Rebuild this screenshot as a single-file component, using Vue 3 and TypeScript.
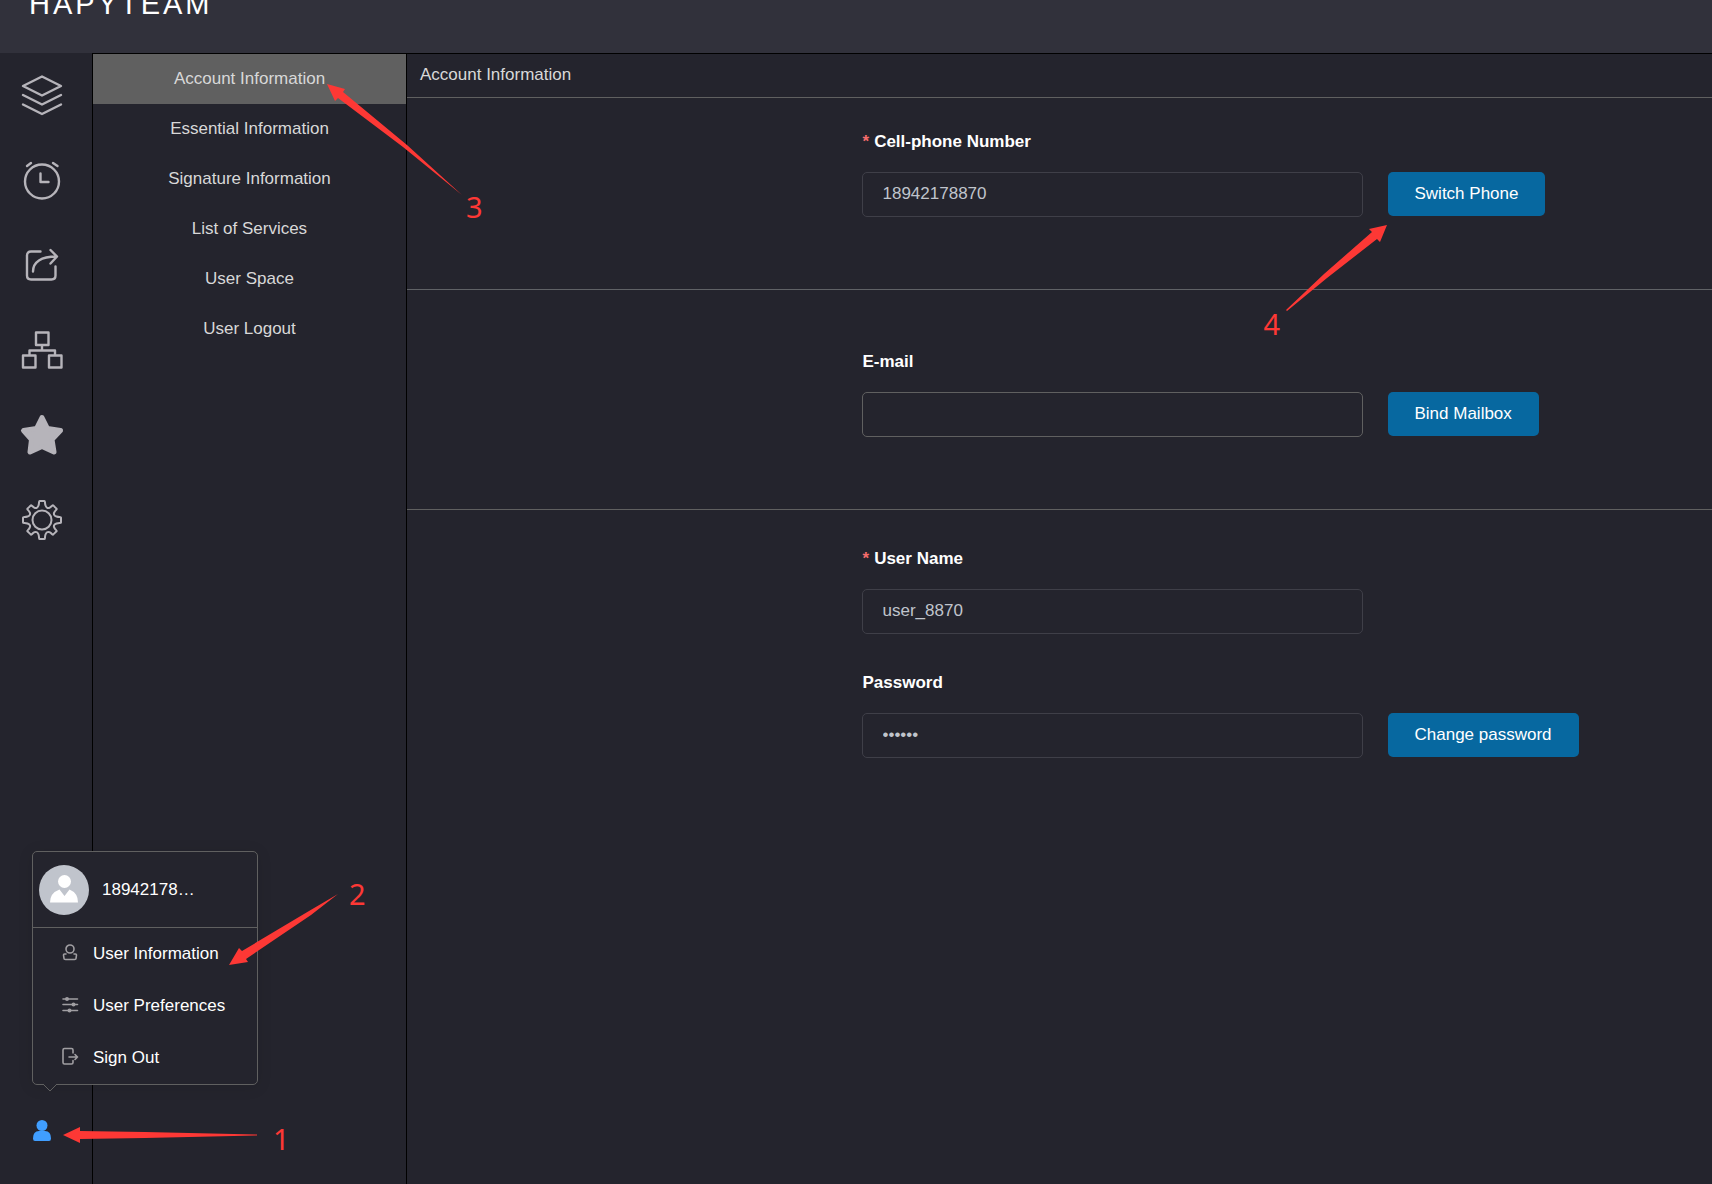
<script setup lang="ts">
import { ref } from 'vue'

const sections = [
  'Account Information',
  'Essential Information',
  'Signature Information',
  'List of Services',
  'User Space',
  'User Logout',
]
const active = ref('Account Information')

const phone = ref('18942178870')
const email = ref('')
const userName = ref('user_8870')
const password = ref('secret')

// Smoothed outline of an eight-toothed gear centred on the origin.
function gearPath(): string {
  const tooth: [number, number][] = [
    [-4, -13],
    [-3, -16],
    [-3, -19],
    [-2, -19],
    [2, -19],
    [3, -19],
    [3, -16],
    [4, -13],
  ]
  const points: [number, number][] = []
  for (let k = 0; k < 8; k++) {
    const a = (k * Math.PI) / 4
    const scale = k % 2 ? 0.96 : 1
    for (const [x, y] of tooth) {
      points.push([
        scale * (x * Math.cos(a) - y * Math.sin(a)),
        scale * (x * Math.sin(a) + y * Math.cos(a)),
      ])
    }
  }
  const at = (p: number, q: number) => `${p.toFixed(2)} ${q.toFixed(2)}`
  const last = points[points.length - 1]
  let d = `M${at((last[0] + points[0][0]) / 2, (last[1] + points[0][1]) / 2)}`
  points.forEach((p, i) => {
    const next = points[(i + 1) % points.length]
    d += `Q${at(p[0], p[1])} ${at((p[0] + next[0]) / 2, (p[1] + next[1]) / 2)}`
  })
  return `${d}Z`
}
const gear = gearPath()
</script>

<template>
  <div class="app">
    <header class="topbar">
      <h1 class="brand">HAPYTEAM</h1>
    </header>

    <div class="body">
      <nav class="rail" aria-label="Main">
        <button class="rail-btn" type="button" aria-label="Projects">
          <svg viewBox="0 0 40 40">
            <path d="M20 1.500L39 11L20 20.500L1 11Z M1 20L20 29.500L39 20 M1 29.500L20 39L39 29.500" />
          </svg>
        </button>
        <button class="rail-btn" type="button" aria-label="Reminders">
          <svg viewBox="0 0 40 40">
            <circle cx="20" cy="21.500" r="17" />
            <path d="M18.500 13.500V22H26.500 M5 6L9 3 M31 3L35.500 6" />
          </svg>
        </button>
        <button class="rail-btn" type="button" aria-label="Share">
          <svg viewBox="0 0 40 40">
            <path d="M18.500 6.500H9Q5 6.500 5 10.500V30.500Q5 34.500 9 34.500H29.500Q33.500 34.500 33.500 30.500V21.500" />
            <path d="M11 26.500C11 17 19 11.500 34.500 11.500 M28.500 5L35 11.500L28.500 18.500" />
          </svg>
        </button>
        <button class="rail-btn" type="button" aria-label="Structure">
          <svg viewBox="0 0 40 40">
            <path d="M14 2.500H26.500V15H14Z M1 25.500H13.500V37.500H1Z M27 25.500H39.500V37.500H27Z M20 15V20.500 M7.500 25V20.500H33V25" />
          </svg>
        </button>
        <button class="rail-btn" type="button" aria-label="Favourites">
          <svg viewBox="0 0 40 40">
            <path class="solid" d="M20 2.500L25.500 13.500L38.500 15.500L30 24.500L32 37L20 31.500L8 37L9.500 24.500L1.500 15.500L14.500 13.500Z" />
          </svg>
        </button>
        <button class="rail-btn" type="button" aria-label="Settings">
          <svg class="thin" viewBox="-20 -20 40 40">
            <path :d="gear" />
            <circle r="9.500" />
          </svg>
        </button>

        <div class="account">
          <button class="me" type="button" aria-label="Account">
            <svg viewBox="0 0 18 21">
              <circle cx="9" cy="5.500" r="5.500" />
              <path d="M0 18.500Q0 11 6 11H12Q18 11 18 18.500Q18 21 16 21H2Q0 21 0 18.500Z" />
            </svg>
          </button>

          <div class="popover">
            <div class="profile">
              <svg class="avatar" viewBox="0 0 50 50">
                <circle cx="25" cy="25" r="25" fill="#c0c4cc" />
                <circle cx="25.500" cy="16.500" r="6.500" fill="#fff" />
                <path d="M11 37.500Q11 28 20.500 24.500L25.500 31L30.500 24.500Q39 28 39 37.500Z" fill="#fff" />
              </svg>
              <span>18942178…</span>
            </div>
            <a class="entry" href="#information">
              <svg viewBox="0 1 16 16">
                <circle cx="8" cy="4" r="4" />
                <path d="M4 9H2.500Q1.500 9 1.500 10L2 13.500Q2 14.500 3.500 14.500H12.500Q14 14.500 14 13.500L14.500 10Q14.500 9 13.500 9H12" />
              </svg>
              User Information
            </a>
            <a class="entry" href="#preferences">
              <svg viewBox="0 1 16 16">
                <path d="M1 2H15.500 M1 7.500H15.500 M1 13.500H15.500" />
                <circle class="dot" cx="5" cy="2" r="2" />
                <circle class="dot" cx="11.500" cy="7.500" r="2" />
                <circle class="dot" cx="7.500" cy="13.500" r="2" />
              </svg>
              User Preferences
            </a>
            <a class="entry" href="#signout">
              <svg viewBox="0 1 16 16">
                <path d="M11 4V1Q11 -0.500 9.500 -0.500H2.500Q1 -0.500 1 1V13.500Q1 15 2.500 15H9.500Q11 15 11 13.500V11.500 M7 8H15.500 M13 5.500L15.500 8L13 10.500" />
              </svg>
              Sign Out
            </a>
            <svg class="caret" viewBox="0 0 14 8">
              <path d="M0 -1H14V0L7 7L0 0Z" fill="#24242d" />
              <path d="M0 0L7 7L14 0" fill="none" stroke="#606060" />
            </svg>
          </div>

          <svg class="mark mark-1" viewBox="0 0 194 16">
            <path d="M0 8L17 0V4L82 5L194 7.500V8.500L82 11L17 12V16Z" />
          </svg>
          <span class="num num-1">1</span>
          <svg class="mark mark-2" viewBox="0 0 109 71">
            <path d="M0 71L10 54L13 57L80 17L109 0L82 21L17 65L19 68Z" />
          </svg>
          <span class="num num-2">2</span>
        </div>
      </nav>

      <div class="workspace">
        <nav class="menu" aria-label="User information">
          <button
            v-for="name in sections"
            :key="name"
            type="button"
            class="menu-item"
            :class="{ active: name === active }"
            @click="active = name"
          >
            {{ name }}
          </button>
          <svg class="mark mark-3" viewBox="0 0 135 111">
            <path d="M0 0L18 5L16 8L80 61L135 111L76 63L11 14L8 17Z" />
          </svg>
          <span class="num num-3">3</span>
        </nav>

        <main class="content">
          <h2 class="heading">Account Information</h2>

          <section class="block block-phone">
            <div class="field">
              <label for="phone"><span class="req">*</span>Cell-phone Number</label>
              <div class="row">
                <input id="phone" v-model="phone" type="text" disabled />
                <button class="primary" type="button">Switch Phone</button>
                <svg class="mark mark-4" viewBox="0 0 100 85">
                  <path d="M100 0L93 17L90 14L40 53L0 86L-1 85L37 49L85 7L82 4Z" />
                </svg>
                <span class="num num-4">4</span>
              </div>
            </div>
          </section>

          <section class="block block-mail">
            <div class="field">
              <label for="email">E-mail</label>
              <div class="row">
                <input id="email" v-model="email" type="text" />
                <button class="primary" type="button">Bind Mailbox</button>
              </div>
            </div>
          </section>

          <section class="block block-login">
            <div class="field">
              <label for="user"><span class="req">*</span>User Name</label>
              <div class="row">
                <input id="user" v-model="userName" type="text" disabled />
              </div>
            </div>
            <div class="field">
              <label for="pass">Password</label>
              <div class="row">
                <input id="pass" v-model="password" type="password" disabled />
                <button class="primary" type="button">Change password</button>
              </div>
            </div>
          </section>
        </main>
      </div>
    </div>
  </div>
</template>

<style>
body {
  margin: 0;
  background: #24242d;
}
</style>

<style scoped>
.app {
  display: flex;
  flex-direction: column;
  min-height: 100vh;
  background: #24242d;
  color: #d8d8d8;
  font-family: 'Liberation Sans', Arial, sans-serif;
  font-size: 17px;
  line-height: 22px;
}
button,
input {
  box-sizing: border-box;
  margin: 0;
  font: inherit;
  color: inherit;
}
button {
  padding: 0;
  border: 0;
  background: none;
  cursor: pointer;
}
.topbar {
  height: 53px;
  overflow: hidden;
  background: #31313b;
}
.brand {
  margin: -12px 0 0 29px;
  font-size: 29px;
  font-weight: 400;
  line-height: 32px;
  letter-spacing: 3px;
  color: #fff;
}
.body {
  display: flex;
  flex: 1;
}
.rail {
  position: relative;
  z-index: 1;
  box-sizing: border-box;
  display: flex;
  flex-direction: column;
  gap: 45px;
  width: 92px;
  padding: 22px 0 43px 22px;
}
.rail-btn {
  width: 40px;
  height: 40px;
}
.rail-btn svg {
  display: block;
  overflow: visible;
  fill: none;
  stroke: #b6b4ba;
  stroke-width: 2.4;
  stroke-linecap: round;
  stroke-linejoin: round;
}
.rail-btn .thin {
  stroke-width: 2;
}
.rail-btn .solid {
  fill: #b6b4ba;
  stroke-width: 5;
}
.account {
  position: relative;
  width: 40px;
  margin-top: auto;
}
.me {
  display: block;
  width: 18px;
  height: 21px;
  margin: 0 auto;
}
.me svg {
  display: block;
  fill: #409eff;
}
.popover {
  position: absolute;
  left: 10px;
  bottom: 56px;
  box-sizing: border-box;
  width: 226px;
  border: 1px solid #606060;
  border-radius: 5px;
  background: #24242d;
  box-shadow: 0 2px 15px rgba(0, 0, 0, 0.1);
  color: #fff;
}
.profile {
  display: flex;
  align-items: center;
  gap: 13px;
  height: 75px;
  padding-left: 6px;
  border-bottom: 1px solid #606060;
}
.avatar {
  width: 50px;
  height: 50px;
}
.entry {
  display: flex;
  align-items: center;
  gap: 15px;
  height: 52px;
  padding-left: 29px;
  color: inherit;
  text-decoration: none;
}
.entry svg {
  width: 16px;
  height: 16px;
  overflow: visible;
  fill: none;
  stroke: #a09ea2;
  stroke-width: 1.6;
  stroke-linecap: round;
  stroke-linejoin: round;
}
.entry .dot {
  fill: #a09ea2;
  stroke: none;
}
.caret {
  position: absolute;
  left: 10px;
  top: 100%;
  width: 14px;
  height: 8px;
  overflow: visible;
}
.workspace {
  display: flex;
  flex: 1;
  border-top: 1px solid #000;
  border-left: 1px solid #000;
}
.menu {
  position: relative;
  display: flex;
  flex-direction: column;
  width: 313px;
  border-right: 1px solid #000;
}
.menu-item {
  height: 50px;
}
.menu-item.active {
  background: #606060;
}
.content {
  flex: 1;
}
.heading {
  margin: 0;
  padding: 10px 13px 11px;
  border-bottom: 1px solid #606060;
  font-size: 17px;
  font-weight: 400;
  line-height: 22px;
}
.block {
  padding-left: calc(50% - 198px);
}
.block-phone {
  padding-top: 33px;
  padding-bottom: 72px;
  border-bottom: 1px solid #606266;
}
.block-mail {
  padding-top: 61px;
  padding-bottom: 72px;
  border-bottom: 1px solid #606060;
}
.block-login {
  display: flex;
  flex-direction: column;
  gap: 38px;
  padding-top: 38px;
}
.field {
  display: flex;
  flex-direction: column;
  align-items: flex-start;
  gap: 19px;
}
label {
  padding-left: 1px;
  font-weight: 700;
  color: #fff;
}
.req {
  margin-right: 5px;
  color: #f56c6c;
}
.row {
  position: relative;
  display: flex;
  gap: 25px;
}
input {
  width: 501px;
  height: 45px;
  padding: 0 20px 2px;
  border: 1px solid #606060;
  border-radius: 5px;
  outline: 0;
  background: transparent;
}
input:disabled {
  border-color: #3f3f48;
  color: #c0c4cc;
}
.primary {
  height: 44px;
  padding: 0 27px;
  border-radius: 5px;
  background: #0768a0;
  color: #fff;
}
.mark {
  position: absolute;
  overflow: visible;
  fill: #fd3835;
  pointer-events: none;
}
.num {
  position: absolute;
  font-family: 'Noto Sans', 'Open Sans', sans-serif;
  font-size: 29px;
  line-height: 30px;
  color: #fd3835;
  pointer-events: none;
}
.mark-1 {
  left: 41px;
  top: 7px;
  width: 194px;
  height: 16px;
}
.num-1 {
  left: 251px;
  top: 4px;
}
.mark-2 {
  left: 207px;
  bottom: 176px;
  width: 109px;
  height: 71px;
}
.num-2 {
  left: 327px;
  bottom: 232px;
}
.mark-3 {
  left: 234px;
  top: 30px;
  width: 135px;
  height: 111px;
}
.num-3 {
  left: 373px;
  top: 138px;
}
.mark-4 {
  left: 425px;
  top: 53px;
  width: 100px;
  height: 85px;
}
.num-4 {
  left: 402px;
  top: 137px;
}
</style>
